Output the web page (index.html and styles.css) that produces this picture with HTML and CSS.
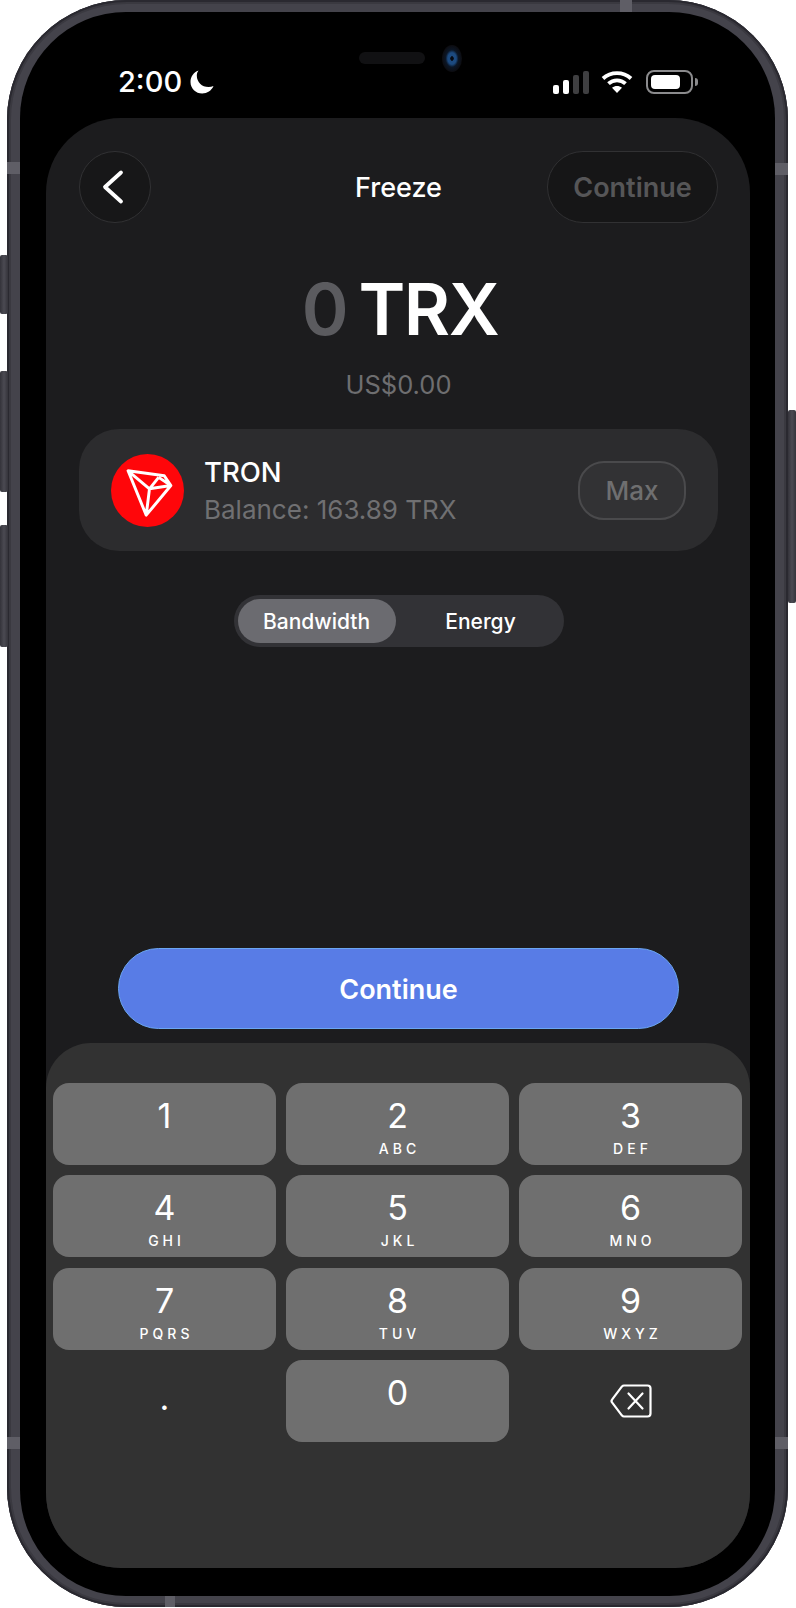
FILE: index.html
```html
<!DOCTYPE html>
<html lang="en">
<head>
    <meta charset="UTF-8">
    <title>Freeze TRX</title>
    <link rel="stylesheet" href="styles.css">
</head>
<body>
    <div class="phone">
        <span class="side-btn btn-mute"></span>
        <span class="side-btn btn-up"></span>
        <span class="side-btn btn-down"></span>
        <span class="side-btn btn-power"></span>
        <span class="band band-left-top"></span>
        <span class="band band-left-bottom"></span>
        <span class="band band-right-top"></span>
        <span class="band band-right-bottom"></span>
        <span class="band band-top"></span>
        <span class="band band-bottom"></span>

        <div class="bezel">
            <span class="speaker"></span>
            <span class="camera"></span>

            <div class="status-bar">
                <div class="status-left">
                    <span class="clock">2:00</span>
                    <svg class="moon" viewBox="0 0 24 24" width="24" height="24">
                        <path d="M8.500 0.500C3.600 2.400 0.500 6.800 0.500 12c0 6.600 5.300 11.500 11.700 11.500 4.900 0 9.300-2.900 11.300-7.500-1.500 0.700-3.200 1-4.900 1C11.800 17 6.800 12 6.800 5.400c0-1.700 0.600-3.400 1.700-4.900z" fill="#fff"/>
                    </svg>
                </div>
                <div class="status-right">
                    <div class="signal">
                        <span class="bar bar1"></span>
                        <span class="bar bar2"></span>
                        <span class="bar bar3 off"></span>
                        <span class="bar bar4 off"></span>
                    </div>
                    <svg class="wifi" viewBox="0 0 32 24" width="32" height="24">
                        <path d="M2 8.500C9.800 1.200 22.200 1.200 30 8.500" fill="none" stroke="#fff" stroke-width="3.800"/>
                        <path d="M7.500 13.700C12.300 9.200 19.700 9.200 24.500 13.700" fill="none" stroke="#fff" stroke-width="3.800"/>
                        <path d="M11 17.800C14 15.400 18 15.400 21 17.800L16 23z" fill="#fff"/>
                    </svg>
                    <div class="battery"><span class="battery-level"></span></div>
                    <span class="battery-cap"></span>
                </div>
            </div>

            <div class="screen">
                <div class="main">
                    <div class="top-bar">
                        <button class="back-btn">
                            <svg viewBox="0 0 24 36" width="24" height="36">
                                <path d="M20 3.500L4 18l16 14.500" fill="none" stroke="#fff" stroke-width="3.800" stroke-linecap="round" stroke-linejoin="round"/>
                            </svg>
                        </button>
                        <div class="title">Freeze</div>
                        <button class="top-continue">Continue</button>
                    </div>

                    <div class="amount"><span class="amount-zero">0</span> TRX</div>
                    <div class="fiat">US$0.00</div>

                    <div class="token-card">
                        <svg class="token-icon" viewBox="0 0 74 74" width="73" height="73">
                            <circle cx="37" cy="37" r="37" fill="#ff060a"/>
                            <path d="M17.300 17L54 22l6.700 10-25 30zM17.300 17L39 35.300l-3.300 26.700M39 35.300L60.700 32M39 35.300L48.300 23.700M48.300 23.700L60.700 32" fill="none" stroke="#fff" stroke-width="3" stroke-linejoin="round"/>
                        </svg>
                        <div class="token-info">
                            <div class="token-name">TRON</div>
                            <div class="token-balance">Balance: 163.89 TRX</div>
                        </div>
                        <button class="max-btn">Max</button>
                    </div>

                    <div class="segment">
                        <div class="segment-item active">Bandwidth</div>
                        <div class="segment-item energy">Energy</div>
                    </div>

                    <button class="continue-btn">Continue</button>
                </div>

                <div class="keypad">
                    <div class="key"><span class="digit">1</span></div>
                    <div class="key"><span class="digit">2</span><span class="letters">ABC</span></div>
                    <div class="key"><span class="digit">3</span><span class="letters">DEF</span></div>
                    <div class="key"><span class="digit">4</span><span class="letters">GHI</span></div>
                    <div class="key"><span class="digit">5</span><span class="letters">JKL</span></div>
                    <div class="key"><span class="digit">6</span><span class="letters">MNO</span></div>
                    <div class="key"><span class="digit">7</span><span class="letters">PQRS</span></div>
                    <div class="key"><span class="digit">8</span><span class="letters">TUV</span></div>
                    <div class="key"><span class="digit">9</span><span class="letters">WXYZ</span></div>
                    <div class="key plain dot-key"><span class="digit">.</span></div>
                    <div class="key"><span class="digit">0</span></div>
                    <div class="key plain icon-key">
                        <svg viewBox="0 0 42 34" width="42" height="34">
                            <path d="M14 1.500H37.500a3 3 0 0 1 3 3v25a3 3 0 0 1-3 3H14a3 3 0 0 1-2-0.900L2.200 18.600a2.400 2.400 0 0 1 0-3.200L12 2.400a3 3 0 0 1 2-0.900z" fill="none" stroke="#fff" stroke-width="2.200" stroke-linejoin="round"/>
                            <path d="M18.500 9.500l14 15M32.500 9.500l-14 15" fill="none" stroke="#fff" stroke-width="2.200" stroke-linecap="round"/>
                        </svg>
                    </div>
                </div>
            </div>
        </div>
    </div>
</body>
</html>
```

FILE: styles.css
```css
* {
    box-sizing: border-box;
}
body {
    margin: 0;
    background-color: #fff;
    font-family: Inter, "Liberation Sans", sans-serif;
    color: #fff;
}
button {
    font-family: inherit;
    cursor: pointer;
}

/* device frame */
.phone {
    position: relative;
    width: 781px;
    height: 1607px;
    margin-left: 7px;
    padding: 12px 13px 11px 13px;
    background-color: #44434b;
    border-radius: 120px;
    box-shadow: inset 0 0 0 2px #2a2930, inset 0 0 0 4px #3a3940;
}
.side-btn {
    position: absolute;
    width: 8px;
    background: linear-gradient(90deg, #34333a, #4b4a52 50%, #35343b);
    border-radius: 2px;
}
.btn-mute {
    left: -7px;
    top: 255px;
    height: 59px;
}
.btn-up {
    left: -7px;
    top: 371px;
    height: 121px;
}
.btn-down {
    left: -7px;
    top: 525px;
    height: 122px;
}
.btn-power {
    right: -8px;
    top: 410px;
    height: 193px;
}
.band {
    position: absolute;
    background-color: #5f5e66;
}
.band-left-top,
.band-left-bottom,
.band-right-top,
.band-right-bottom {
    width: 13px;
    height: 12px;
}
.band-left-top {
    left: 0;
    top: 162px;
}
.band-left-bottom {
    left: 0;
    top: 1437px;
}
.band-right-top {
    right: 0;
    top: 163px;
}
.band-right-bottom {
    right: 0;
    top: 1437px;
}
.band-top {
    left: 613px;
    top: 0;
    width: 12px;
    height: 12px;
}
.band-bottom {
    left: 158px;
    bottom: 0;
    width: 10px;
    height: 11px;
}
.bezel {
    position: relative;
    height: 100%;
    padding: 0 25px 28px 26px;
    background-color: #000;
    border-radius: 106px;
    display: flex;
    flex-direction: column;
}
.speaker {
    position: absolute;
    left: 339px;
    top: 40px;
    width: 66px;
    height: 12px;
    background-color: #111113;
    border-radius: 6px;
}
.camera {
    position: absolute;
    left: 422px;
    top: 33px;
    width: 20px;
    height: 27px;
    background: radial-gradient(ellipse at center, #060a12 0 10%, #1c4a80 14% 30%, #0b1626 45%, #0c0c10 70%);
    border-radius: 50%;
}

/* status bar */
.status-bar {
    height: 106px;
    flex-shrink: 0;
    display: flex;
    justify-content: space-between;
    align-items: flex-start;
    padding: 58px 52px 0 72px;
}
.status-left {
    display: flex;
    align-items: center;
    gap: 8px;
}
.clock {
    font-size: 29px;
    line-height: 24px;
    font-weight: 500;
}
.status-right {
    display: flex;
    align-items: center;
    height: 24px;
}
.signal {
    display: flex;
    align-items: flex-end;
    gap: 4px;
    height: 23px;
    margin-right: 12px;
}
.bar {
    width: 6px;
    background-color: #fff;
    border-radius: 2px;
}
.bar.off {
    background-color: #3f3f41;
}
.bar1 {
    height: 9px;
}
.bar2 {
    height: 14px;
}
.bar3 {
    height: 19px;
}
.bar4 {
    height: 23px;
}
.wifi {
    margin-right: 13px;
}
.battery {
    width: 47px;
    height: 24px;
    padding: 3px;
    border: 2px solid #8b8b8d;
    border-radius: 8px;
}
.battery-level {
    display: block;
    width: 29px;
    height: 14px;
    background-color: #fff;
    border-radius: 4px;
}
.battery-cap {
    width: 3px;
    height: 8px;
    margin-left: 2px;
    background-color: #8b8b8d;
    border-radius: 0 3px 3px 0;
}

/* screen */
.screen {
    flex: 1;
    display: flex;
    flex-direction: column;
    background-color: #1c1c1e;
    border-radius: 75px;
    overflow: hidden;
}
.main {
    flex: 1;
    display: flex;
    flex-direction: column;
    align-items: center;
    padding: 33px 32px 14px 33px;
}
.top-bar {
    width: 100%;
    display: grid;
    grid-template-columns: 1fr auto 1fr;
    align-items: center;
}
.back-btn {
    width: 72px;
    height: 72px;
    padding: 0 5px 0 0;
    display: flex;
    align-items: center;
    justify-content: center;
    background-color: #171718;
    border: 1px solid #323234;
    border-radius: 50%;
}
.title {
    font-size: 27px;
    font-weight: 500;
}
.top-continue {
    justify-self: end;
    width: 171px;
    height: 72px;
    background-color: #161617;
    border: 1px solid #313133;
    border-radius: 36px;
    color: #565658;
    font-size: 27px;
    font-weight: 600;
}
.amount {
    margin-top: 41px;
    margin-left: 3px;
    font-size: 71px;
    line-height: 90px;
    font-weight: 600;
    letter-spacing: -1.500px;
    word-spacing: -5px;
}
.amount-zero {
    color: #5b5b5f;
}
.fiat {
    margin-top: 16px;
    font-size: 25.500px;
    line-height: 30px;
    color: #6e6e70;
}
.token-card {
    width: 100%;
    height: 122px;
    margin-top: 29px;
    padding: 0 32px;
    display: flex;
    align-items: center;
    background-color: #2c2c2e;
    border-radius: 40px;
}
.token-icon {
    flex-shrink: 0;
}
.token-info {
    flex: 1;
    margin-left: 20px;
}
.token-name {
    font-size: 27.500px;
    line-height: 32px;
    font-weight: 500;
}
.token-balance {
    margin-top: 7px;
    font-size: 26px;
    line-height: 30px;
    color: #707072;
}
.max-btn {
    width: 108px;
    height: 59px;
    background-color: #323234;
    border: 2px solid #4a4a4c;
    border-radius: 26px;
    color: #6f6f70;
    font-size: 26px;
    font-weight: 500;
}
.segment {
    width: 330px;
    height: 52px;
    margin-top: 44px;
    padding: 4px;
    display: flex;
    background-color: #323236;
    border-radius: 26px;
}
.segment-item {
    flex: 1;
    display: flex;
    align-items: center;
    justify-content: center;
    font-size: 21px;
    font-weight: 500;
}
.segment-item.active {
    flex: 0 0 158px;
    background-color: #6b6b70;
    border-radius: 22px;
}
.segment-item.energy {
    padding-left: 6px;
}
.continue-btn {
    width: 561px;
    height: 81px;
    margin-top: auto;
    padding-top: 2px;
    background-color: #587ce6;
    border: 1px solid #6ba6f2;
    border-radius: 41px;
    color: #fff;
    font-size: 27px;
    font-weight: 600;
}

/* number pad */
.keypad {
    height: 525px;
    flex-shrink: 0;
    padding: 40px 8px 0 7px;
    display: grid;
    grid-template-columns: repeat(3, 1fr);
    grid-auto-rows: 82px;
    gap: 10.400px 10px;
    background-color: #323232;
    border-radius: 45px 45px 0 0;
}
.key {
    padding-top: 13px;
    display: flex;
    flex-direction: column;
    align-items: center;
    background-color: #6f6f6f;
    border-radius: 16px;
}
.key.plain {
    background-color: transparent;
}
.dot-key {
    padding-top: 18px;
}
.icon-key {
    padding-top: 24px;
}
.digit {
    font-size: 34px;
    line-height: 40px;
}
.letters {
    margin-top: 5px;
    font-size: 14px;
    line-height: 16px;
    font-weight: 500;
    letter-spacing: 4px;
    padding-left: 4px;
}
```
